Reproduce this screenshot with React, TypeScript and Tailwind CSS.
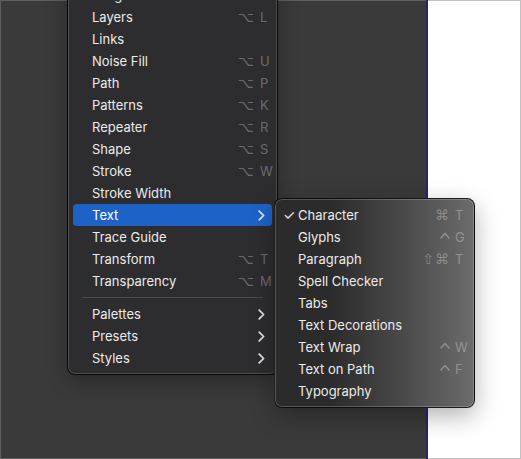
import React from "react";

type Item = { label: string; mods?: string; k?: string; sub?: boolean; active?: boolean; check?: boolean };

const mainItems: Item[] = [
  { label: "Image" },
  { label: "Layers", mods: "⌥", k: "L" },
  { label: "Links" },
  { label: "Noise Fill", mods: "⌥", k: "U" },
  { label: "Path", mods: "⌥", k: "P" },
  { label: "Patterns", mods: "⌥", k: "K" },
  { label: "Repeater", mods: "⌥", k: "R" },
  { label: "Shape", mods: "⌥", k: "S" },
  { label: "Stroke", mods: "⌥", k: "W" },
  { label: "Stroke Width" },
  { label: "Text", sub: true, active: true },
  { label: "Trace Guide" },
  { label: "Transform", mods: "⌥", k: "T" },
  { label: "Transparency", mods: "⌥", k: "M" },
];

const lowerItems: Item[] = [
  { label: "Palettes", sub: true },
  { label: "Presets", sub: true },
  { label: "Styles", sub: true },
];

const subItems: Item[] = [
  { label: "Character", mods: "⌘", k: "T", check: true },
  { label: "Glyphs", mods: "⌃", k: "G" },
  { label: "Paragraph", mods: "⇧⌘", k: "T" },
  { label: "Spell Checker" },
  { label: "Tabs" },
  { label: "Text Decorations" },
  { label: "Text Wrap", mods: "⌃", k: "W" },
  { label: "Text on Path", mods: "⌃", k: "F" },
  { label: "Typography" },
];

function Chevron() {
  return (
    <svg width="7" height="11" viewBox="0 0 7 11" className="mr-[7px]">
      <path d="M1.2 1.2 L5.6 5.5 L1.2 9.8" fill="none" stroke="#e6e6e6" strokeWidth="1.7" strokeLinecap="round" strokeLinejoin="round" />
    </svg>
  );
}

function Shortcut({ mods, k }: { mods: string; k: string }) {
  return (
    <span className="flex items-center text-white/30 font-['DejaVu_Sans','Inter',sans-serif] text-[14px]">
      {mods === "⌃" ? (
        <svg width="10" height="7" viewBox="0 0 10 7" className="mb-[3px]">
          <path d="M1 6 L5 1.5 L9 6" fill="none" stroke="currentColor" strokeWidth="1.6" strokeLinecap="round" strokeLinejoin="round" />
        </svg>
      ) : (
        <span className="text-right tracking-[1px]">{mods}</span>
      )}
      <span className="w-[17px] pl-[5px] font-['Inter',sans-serif] text-[13px]">{k}</span>
    </span>
  );
}

function MainRow({ it }: { it: Item }) {
  return (
    <div
      className={
        "flex items-center h-[22px] rounded-[4px] pl-[19px] " +
        (it.active ? "bg-[#1d63c7] text-white" : "text-[#ebebeb]")
      }
    >
      <span className="flex-1">{it.label}</span>
      {it.mods && it.k ? <Shortcut mods={it.mods} k={it.k} /> : null}
      {it.sub ? <Chevron /> : null}
    </div>
  );
}

function SubRow({ it }: { it: Item }) {
  return (
    <div className="flex items-center h-[22px] rounded-[4px] pl-[3px] pr-[2px] text-[#ebebeb]">
      <span className="w-[15px] text-[14px]">{it.check ? "✓" : ""}</span>
      <span className="flex-1">{it.label}</span>
      {it.mods && it.k ? <Shortcut mods={it.mods} k={it.k} /> : null}
    </div>
  );
}

export default function App() {
  return (
    <div className="relative w-[521px] h-[459px] overflow-hidden flex font-['Inter',sans-serif] text-[13px] leading-none">
      <div className="w-[426px] h-full bg-[#3a3a3a] border-t border-l border-b border-[#5f5f5f]" />
      <div className="w-[2px] h-full bg-[#2a2563]" />
      <div className="flex-1 h-full bg-white border-t border-r border-b border-[#c2c2c2]" />

      <div className="absolute left-[67px] top-[-22px] w-[211px] rounded-[8px] border border-black/80 bg-[#2d2d2f] p-[5px] shadow-[inset_0_0_0_1px_rgba(255,255,255,0.16),0_6px_20px_rgba(0,0,0,0.3)]">
        {mainItems.map((it) => (
          <MainRow key={it.label} it={it} />
        ))}
        <div className="h-[11px] flex items-center px-[9px]">
          <div className="h-px w-full bg-[#4a4a4c]" />
        </div>
        {lowerItems.map((it) => (
          <MainRow key={it.label} it={it} />
        ))}
      </div>

      <div className="absolute left-[274px] top-[198px] w-[201px] rounded-[8px] border border-black/70 bg-[linear-gradient(to_right,#2b2b2b_28%,#4a4a4a_65%,#6c6c6c_100%)] p-[5px] shadow-[inset_0_0_0_1px_rgba(255,255,255,0.2),0_8px_24px_rgba(0,0,0,0.3)]">
        {subItems.map((it) => (
          <SubRow key={it.label} it={it} />
        ))}
      </div>
    </div>
  );
}
